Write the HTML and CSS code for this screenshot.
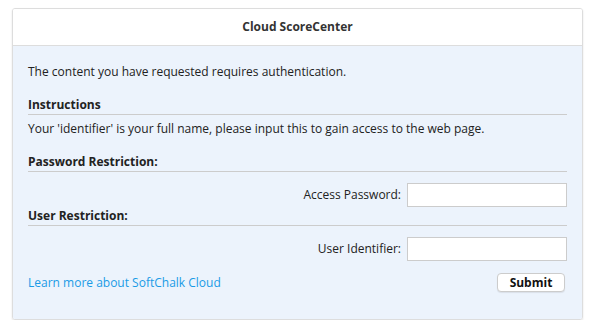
FILE: index.html
```html
<!DOCTYPE html>
<html lang="en">

<head>
  <title>Cloud ScoreCenter</title>
  <link rel="stylesheet" href="styles.css">
</head>

<body>
  <div class="panel">
    <div class="panel-header">Cloud ScoreCenter</div>
    <form class="panel-body" onsubmit="return false">
      <p class="intro">The content you have requested requires authentication.</p>

      <h3 class="section-title">Instructions</h3>
      <p class="instructions">Your 'identifier' is your full name, please input this to gain access to the web page.</p>

      <h3 class="section-title">Password Restriction:</h3>
      <div class="field-row">
        <label for="accessPassword">Access Password:</label>
        <input type="password" id="accessPassword">
      </div>

      <h3 class="section-title tight">User Restriction:</h3>
      <div class="field-row">
        <label for="userIdentifier">User Identifier:</label>
        <input type="text" id="userIdentifier">
      </div>

      <div class="footer-row">
        <a href="#" class="learn-more">Learn more about SoftChalk Cloud</a>
        <button type="submit" class="submit-btn">Submit</button>
      </div>
    </form>
  </div>
</body>

</html>
```

FILE: styles.css
```css
body {
  margin: 0;
  padding: 8px 0 0 12px;
  background-color: #fff;
  font-family: "Open Sans", "Liberation Sans", sans-serif;
  font-size: 12px;
  line-height: 18px;
  color: #222;
}

.panel {
  width: 569px;
  border: 1px solid #ddd;
  border-radius: 3px;
  box-shadow: 0 1px 2px rgba(0, 0, 0, 0.12);
  overflow: hidden;
}

.panel-header {
  height: 36px;
  line-height: 36px;
  text-align: center;
  font-weight: bold;
  color: #333;
  background-color: #fff;
  border-bottom: 1px solid #ddd;
}

.panel-body {
  background-color: #ecf3fc;
  padding: 17px 15px 27px 15px;
}

.intro,
.instructions {
  margin: 0;
}

.section-title {
  margin: 15px 0 0 0;
  font-size: 12px;
  line-height: 18px;
  font-weight: bold;
  border-bottom: 1px solid #ccc;
}

.instructions {
  margin-top: 5px;
}

.section-title.tight {
  margin-top: 0;
}

.field-row {
  display: flex;
  justify-content: flex-end;
  align-items: center;
  gap: 6px;
  margin-top: 11px;
}

.field-row label {
  color: #222;
}

.field-row input {
  width: 160px;
  height: 24px;
  box-sizing: border-box;
  border: 1px solid #ccc;
  background-color: #fff;
  padding: 2px 4px;
  font-family: inherit;
  font-size: 12px;
  outline: none;
}

.footer-row {
  display: flex;
  justify-content: space-between;
  align-items: center;
  margin-top: 12px;
  padding-right: 2px;
}

.learn-more {
  color: #1a9be6;
  text-decoration: none;
}

.submit-btn {
  width: 68px;
  height: 19px;
  padding: 0;
  border: 1px solid #ccc;
  border-radius: 4px;
  background-color: #fff;
  box-shadow: 0 1px 1px rgba(0, 0, 0, 0.08);
  font-family: inherit;
  font-size: 12px;
  font-weight: bold;
  line-height: 17px;
  color: #111;
}
```
